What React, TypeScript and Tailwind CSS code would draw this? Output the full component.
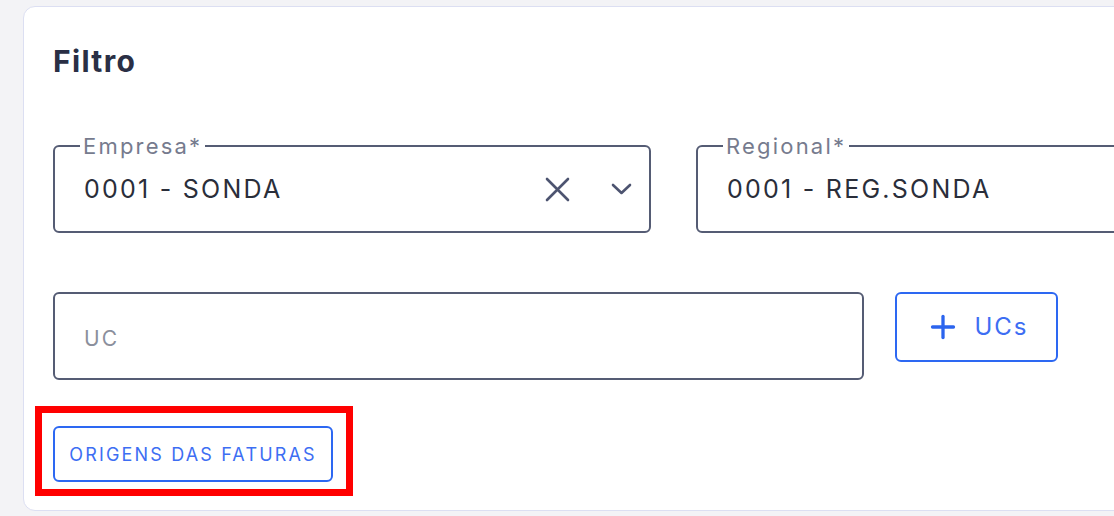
import React from 'react';
import { Plus } from 'lucide-react';

interface SelectFieldProps {
    label: string;
    value: string;
    clearable?: boolean;
}

function SelectField({ label, value, clearable }: SelectFieldProps) {
    return (
        <div className="relative h-[88px] w-[598px] shrink-0 rounded-[6px] border-2 border-[#555c74] flex items-center pl-[29px] pr-[17px]">
            <span className="absolute -top-[14px] left-[25px] bg-white px-[3px] text-[22px] leading-[26px] text-[#767b8e] tracking-[0.1em]">
                {label}
            </span>
            <span className="flex-1 text-[25px] leading-[30px] text-[#2a2e3a] tracking-[0.09em]">{value}</span>
            {clearable && (
                <div className="flex items-center gap-[41px]">
                    {/* clear */}
                    <svg width="25" height="25" viewBox="0 0 25 25" fill="none" stroke="#4d5470" strokeWidth="2.6" strokeLinecap="round">
                        <path d="M2 2 L23 23 M23 2 L2 23" />
                    </svg>
                    {/* dropdown */}
                    <svg width="21" height="12" viewBox="0 0 21 12" fill="none" stroke="#4d5470" strokeWidth="2.6" strokeLinecap="round" strokeLinejoin="round">
                        <path d="M2 2 L10.5 10 L19 2" />
                    </svg>
                </div>
            )}
        </div>
    );
}

export default function App() {
    return (
        <div className="w-[1114px] h-[516px] overflow-hidden bg-[#f3f3f6] pt-[6px] pl-[23px]" style={{ fontFamily: 'Inter, "Noto Sans", sans-serif' }}>
            <div className="w-[1400px] h-[505px] bg-white border border-[#dcdff2] rounded-[12px] pt-[36px] pl-[29px]">
                <h2 className="text-[30px] leading-[36px] font-bold text-[#2a2f45] tracking-[0.045em]">Filtro</h2>

                <div className="mt-[66px] flex gap-[45px]">
                    <SelectField label="Empresa*" value="0001 - SONDA" clearable />
                    <SelectField label="Regional*" value="0001 - REG.SONDA" />
                </div>

                <div className="mt-[59px] flex items-start gap-[31px]">
                    <div className="h-[88px] w-[811px] rounded-[6px] border-2 border-[#555c74] flex items-center pl-[29px] pt-[5px]">
                        <span className="text-[21px] text-[#8b8f9c] tracking-[0.1em]">UC</span>
                    </div>
                    <button className="h-[70px] w-[163px] rounded-[6px] border-2 border-[#2d68f2] flex items-center justify-center gap-[14px] text-[#3d6ef3]">
                        <Plus className="w-[36px] h-[36px] text-[#2b64ee]" strokeWidth={2.2} />
                        <span className="text-[24px] tracking-[0.08em]">UCs</span>
                    </button>
                </div>

                <div className="mt-[46px] relative w-fit">
                    <div className="absolute -left-[18px] -top-[20px] -right-[20px] -bottom-[14px] border-[7px] border-[#ff0000] pointer-events-none" />
                    <button className="h-[56px] w-[280px] rounded-[6px] border-2 border-[#2d68f2] flex items-center justify-center text-[18px] text-[#3d6ef3] tracking-[0.12em] uppercase">
                        Origens das faturas
                    </button>
                </div>
            </div>
        </div>
    );
}
